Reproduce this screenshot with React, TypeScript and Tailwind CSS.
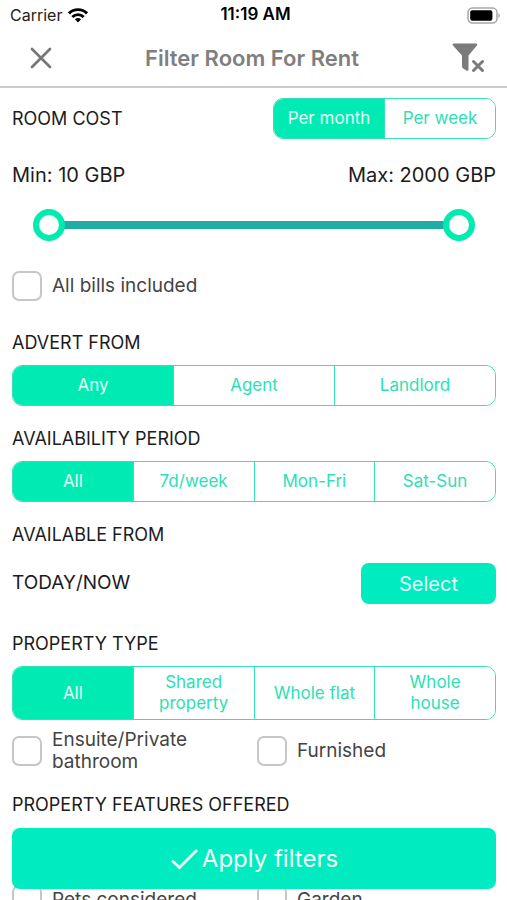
import { useState, type ReactNode } from "react";

function SectionTitle({ children }: { children: ReactNode }) {
  return <h2 className="text-lg leading-6 text-[#1c1c1c]">{children}</h2>;
}

interface SegmentedProps {
  label: string;
  options: string[];
  className?: string;
}

function Segmented({ label, options, className = "" }: SegmentedProps) {
  const [active, setActive] = useState(0);
  return (
    <div
      role="group"
      aria-label={label}
      className={`flex overflow-hidden rounded-[10px] border border-[#36e0b8] ${className}`}
    >
      {options.map((option, index) => (
        <button
          key={option}
          type="button"
          aria-pressed={index === active}
          onClick={() => setActive(index)}
          className={`flex flex-1 items-center justify-center border-[#36e0b8] px-2 text-[17px] leading-[21px] not-first:border-l ${
            index === active ? "bg-[#00ebb4] text-[#e4fff7]" : "bg-white text-[#2cdfb5]"
          }`}
        >
          {option}
        </button>
      ))}
    </div>
  );
}

function CheckOption({ label }: { label: string }) {
  return (
    <label className="flex items-center gap-[10px] text-[19px] leading-[22px] text-[#444444]">
      <input
        type="checkbox"
        className="size-[30px] shrink-0 appearance-none rounded-[7px] border-2 border-[#c6c6c6] bg-white checked:bg-[#00ebb4]"
      />
      <span>{label}</span>
    </label>
  );
}

interface ThumbProps {
  label: string;
  value: number;
  onChange: (value: number) => void;
}

function RangeThumb({ label, value, onChange }: ThumbProps) {
  return (
    <input
      type="range"
      aria-label={label}
      min={10}
      max={2000}
      value={value}
      onChange={(event) => onChange(Number(event.target.value))}
      className="pointer-events-none absolute inset-0 h-8 w-full appearance-none bg-transparent [&::-webkit-slider-thumb]:pointer-events-auto [&::-webkit-slider-thumb]:size-8 [&::-webkit-slider-thumb]:appearance-none [&::-webkit-slider-thumb]:rounded-full [&::-webkit-slider-thumb]:border-[6px] [&::-webkit-slider-thumb]:border-[#00ebb0] [&::-webkit-slider-thumb]:bg-white"
    />
  );
}

function WifiIcon() {
  return (
    <svg viewBox="0 0 20 15" className="h-[15px] w-5" fill="none" stroke="#000" strokeWidth="2.9" aria-hidden="true">
      <path d="M1 5.4C6 .4 14 .4 19 5.4" />
      <path d="M4.3 9C7.6 5.8 12.4 5.8 15.7 9" />
      <path d="M10 14.5 6.9 11.3C8.7 9.7 11.3 9.7 13.1 11.3Z" fill="#000" stroke="none" />
    </svg>
  );
}

function BatteryIcon() {
  return (
    <svg viewBox="0 0 34 17" className="h-[17px] w-[34px]" aria-hidden="true">
      <rect x="1" y="1" width="29" height="15" rx="4.5" fill="#fff" stroke="#a8a8a8" strokeWidth="1.5" />
      <rect x="3.2" y="3.2" width="22.2" height="10.6" rx="2" fill="#000" />
      <path d="M31.3 6.2c2 .8 2 3.8 0 4.6Z" fill="#a8a8a8" />
    </svg>
  );
}

function CloseIcon() {
  return (
    <svg viewBox="0 0 22 22" className="size-[22px]" fill="none" stroke="#777" strokeWidth="2.7" strokeLinecap="round" aria-hidden="true">
      <path d="M2 2 20 20M20 2 2 20" />
    </svg>
  );
}

function ClearFilterIcon() {
  return (
    <svg viewBox="0 0 34 30" className="h-[30px] w-[34px]" aria-hidden="true">
      <path
        d="M2 .5h22c1.300 0 1.700 1.200.9 2.100L16.500 12.500V26.500c0 1.400-1.200 1.700-2.200 1L11 25.300c-.7-.5-1-1-1-1.800V12.500L1 2.600C.2 1.700.7.500 2 .500Z"
        fill="#7b7b7b"
      />
      <path d="m21.500 18.500 9 9m0-9-9 9" fill="none" stroke="#7b7b7b" strokeWidth="3" strokeLinecap="round" />
    </svg>
  );
}

function CheckIcon() {
  return (
    <svg viewBox="0 0 28 22" className="h-[22px] w-7" fill="none" stroke="#f2fffb" strokeWidth="2.8" aria-hidden="true">
      <path d="m2 12.500 7.500 7L27 2" />
    </svg>
  );
}

export default function App() {
  const [min, setMin] = useState(10);
  const [max, setMax] = useState(2000);

  return (
    <div className="relative flex h-screen flex-col overflow-hidden bg-white font-['Inter','Liberation_Sans',sans-serif]">
      <div className="grid h-[30px] shrink-0 grid-cols-3 items-center pr-[6px] pl-[10px] text-base text-[#222222]">
        <div className="flex items-center gap-[6px]">
          <span>Carrier</span>
          <WifiIcon />
        </div>
        <span className="text-center text-[17px] font-semibold text-black">11:19 AM</span>
        <div className="flex justify-end">
          <BatteryIcon />
        </div>
      </div>

      <header className="flex h-[58px] shrink-0 items-center justify-between border-b-2 border-[#cccccc] pr-[21px] pl-[30px]">
        <button type="button" aria-label="Close">
          <CloseIcon />
        </button>
        <h1 className="text-[22px] leading-7 font-semibold text-[#7f7f7f]">Filter Room For Rent</h1>
        <button type="button" aria-label="Clear filters">
          <ClearFilterIcon />
        </button>
      </header>

      <main className="flex-1 overflow-y-auto pt-[10px] pr-[11px] pl-3 [scrollbar-width:none]">
        <div className="flex items-center justify-between">
          <SectionTitle>ROOM COST</SectionTitle>
          <Segmented label="Room cost period" options={["Per month", "Per week"]} className="h-[41px] w-[223px]" />
        </div>

        <div className="mt-6 flex justify-between text-xl leading-6 text-[#1c1c1c]">
          <span>Min: {min} GBP</span>
          <span>Max: {max} GBP</span>
        </div>

        <div className="relative mx-[21px] mt-[22px] flex h-8 items-center">
          <div className="mx-4 h-2 flex-1 bg-[#1fada5]" />
          <RangeThumb label="Minimum cost" value={min} onChange={(v) => setMin(Math.min(v, max))} />
          <RangeThumb label="Maximum cost" value={max} onChange={(v) => setMax(Math.max(v, min))} />
        </div>

        <div className="mt-[30px]">
          <CheckOption label="All bills included" />
        </div>

        <section className="mt-[30px]">
          <SectionTitle>ADVERT FROM</SectionTitle>
          <Segmented label="Advert from" options={["Any", "Agent", "Landlord"]} className="mt-[10px] h-[41px]" />
        </section>

        <section className="mt-[21px]">
          <SectionTitle>AVAILABILITY PERIOD</SectionTitle>
          <Segmented
            label="Availability period"
            options={["All", "7d/week", "Mon-Fri", "Sat-Sun"]}
            className="mt-[10px] h-[41px]"
          />
        </section>

        <section className="mt-[21px]">
          <SectionTitle>AVAILABLE FROM</SectionTitle>
          <div className="mt-4 flex items-center justify-between text-[19px] text-[#1c1c1c]">
            <span>TODAY/NOW</span>
            <button type="button" className="h-[41px] w-[135px] rounded-lg bg-[#00ebc0] text-xl text-[#e4fff9]">
              Select
            </button>
          </div>
        </section>

        <section className="mt-7">
          <SectionTitle>PROPERTY TYPE</SectionTitle>
          <Segmented
            label="Property type"
            options={["All", "Shared property", "Whole flat", "Whole house"]}
            className="mt-[10px] h-[54px]"
          />
          <div className="mt-[9px] grid grid-cols-2 gap-x-[6px]">
            <CheckOption label="Ensuite/Private bathroom" />
            <CheckOption label="Furnished" />
          </div>
        </section>

        <section className="mt-5">
          <SectionTitle>PROPERTY FEATURES OFFERED</SectionTitle>
          <div className="mt-[68px] grid grid-cols-2 gap-x-[6px]">
            <CheckOption label="Pets considered" />
            <CheckOption label="Garden" />
          </div>
        </section>
      </main>

      <button
        type="button"
        className="absolute right-[11px] bottom-[11px] left-3 flex h-[61px] items-center justify-center gap-1 rounded-lg bg-[#00ebc0] text-2xl text-[#f2fffb]"
      >
        <CheckIcon />
        Apply filters
      </button>
    </div>
  );
}
